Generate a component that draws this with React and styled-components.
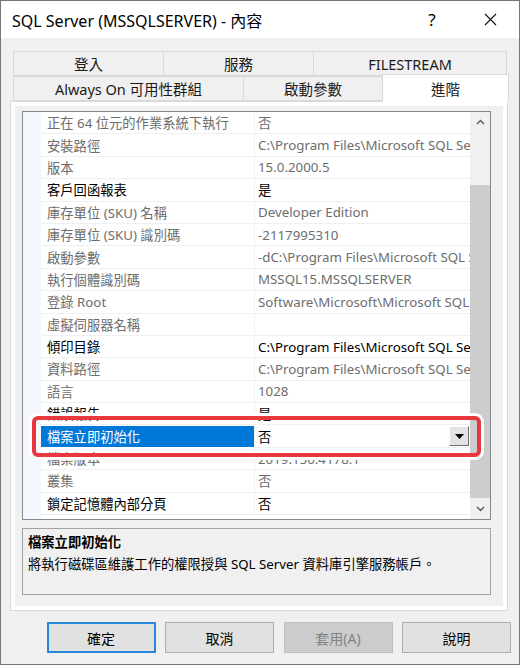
import React from "react";
import styled, { createGlobalStyle } from "styled-components";

const GlobalStyle = createGlobalStyle`
  html, body { margin: 0; padding: 0; background: #fff; }
  * { box-sizing: border-box; }
`;

const FONT = `"Segoe UI", "Noto Sans", "Noto Sans CJK TC", sans-serif`;

const Window = styled.div`
  width: 520px;
  height: 665px;
  border: 1px solid #777;
  background: #f0f0f0;
  display: flex;
  flex-direction: column;
  font-family: ${FONT};
  color: #000;
`;

const TitleBar = styled.div`
  height: 37px;
  flex-shrink: 0;
  background: #fff;
  display: flex;
  align-items: center;
  padding-left: 11px;
`;

const Title = styled.div`
  flex: 1;
  font-size: 16px;
`;

const TitleButton = styled.div`
  width: 58px;
  height: 37px;
  display: flex;
  align-items: center;
  justify-content: center;
  font-size: 17px;
`;

const Body = styled.div`
  flex: 1;
  display: flex;
  flex-direction: column;
  padding: 13px 8px 0 9px;
`;

const TabRow = styled.div`
  display: flex;
  height: 25px;
  padding-left: ${(p) => p.$indent || 0}px;
  align-items: flex-start;
`;

const Tab = styled.div`
  width: ${(p) => p.$w}px;
  height: ${(p) => (p.$active ? 28 : 25)}px;
  margin-top: ${(p) => (p.$active ? -2 : 0)}px;
  margin-left: -1px;
  border: 1px solid #d9d9d9;
  border-bottom: ${(p) => (p.$active ? "none" : "1px solid #d9d9d9")};
  background: ${(p) => (p.$active ? "#fff" : "#f0f0f0")};
  position: relative;
  z-index: ${(p) => (p.$active ? 2 : 0)};
  display: flex;
  align-items: center;
  justify-content: center;
  font-size: 14.5px;
  color: #1a1a1a;
  &:first-child { margin-left: 0; }
`;

const Panel = styled.div`
  position: relative;
  width: 498px;
  height: 510px;
  border: 1px solid #d9d9d9;
  background: #f0f0f0;
  box-shadow: inset 0 0 0 4px #fff;
  padding: 9px 16px 0 11px;
  display: flex;
  flex-direction: column;
`;

const Grid = styled.div`
  height: 409px;
  flex-shrink: 0;
  border: 1px solid #828790;
  background: #fff;
  display: flex;
`;

const Rows = styled.div`
  flex: 1;
  display: flex;
  flex-direction: column;
  overflow: hidden;
`;

const Row = styled.div`
  display: grid;
  grid-template-columns: 18px 214px 1fr;
  height: 22.4px;
  flex-shrink: 0;
  font-size: 13.3px;
`;

const Filler = styled(Row)`
  flex: 1;
  height: auto;
`;

const Gutter = styled.div`
  background: #f4f7fb;
`;

const LabelCell = styled.div`
  display: flex;
  align-items: center;
  padding-left: 6px;
  white-space: nowrap;
  overflow: hidden;
  border-right: 1px solid #f0f0f0;
  border-bottom: 1px solid #f0f0f0;
  color: ${(p) => (p.$dark ? "#000" : "#6d6d6d")};
  ${(p) =>
    p.$selected &&
    `
    background: #0078d7;
    color: #fff;
    border-top: 1px solid #fff;
    border-bottom: 1px solid #fff;
  `}
`;

const ValueCell = styled.div`
  display: flex;
  align-items: center;
  padding-left: 3px;
  white-space: nowrap;
  overflow: hidden;
  border-bottom: 1px solid #f0f0f0;
  color: ${(p) => (p.$dark ? "#000" : "#6d6d6d")};
`;

const ValueText = styled.span`
  flex: 1;
  overflow: hidden;
`;

const DropButton = styled.div`
  width: 20px;
  height: 20px;
  flex-shrink: 0;
  margin-right: 1px;
  background: #e3e3e3;
  border: 1px solid;
  border-color: #fdfdfd #6f6f6f #6f6f6f #fdfdfd;
  display: flex;
  align-items: center;
  justify-content: center;
`;

const Scrollbar = styled.div`
  width: 20px;
  flex-shrink: 0;
  background: #f0f0f0;
  display: flex;
  flex-direction: column;
`;

const ArrowBox = styled.div`
  height: ${(p) => p.$h}px;
  display: flex;
  align-items: center;
  justify-content: center;
  flex-shrink: 0;
`;

const Track = styled.div`
  flex: 1;
  padding-top: ${(p) => p.$offset}px;
`;

const Thumb = styled.div`
  height: ${(p) => p.$h}px;
  background: #cdcdcd;
`;

const Description = styled.div`
  margin-top: 8px;
  height: 67px;
  border: 1px solid #a3a3a3;
  padding: 2px 5px;
  font-size: 13.3px;
  line-height: 22px;
`;

const DescTitle = styled.div`
  font-weight: bold;
`;

const Highlight = styled.div`
  position: absolute;
  left: 21px;
  top: 314px;
  width: 449px;
  height: 41px;
  border: 4px solid #e8383d;
  border-radius: 6px;
  box-shadow: 0 0 0 3px #fff;
  pointer-events: none;
`;

const ButtonRow = styled.div`
  display: flex;
  justify-content: flex-end;
  gap: 9.5px;
  margin-top: 11px;
`;

const Button = styled.div`
  width: 109px;
  height: 31px;
  display: flex;
  align-items: center;
  justify-content: center;
  font-size: 14px;
  background: ${(p) => (p.$disabled ? "#cccccc" : "#e1e1e1")};
  color: ${(p) => (p.$disabled ? "#838383" : "#000")};
  border: ${(p) =>
    p.$default ? "2px solid #2a86da" : p.$disabled ? "1px solid #bfbfbf" : "1px solid #adadad"};
`;

const rows = [
  { label: "正在 64 位元的作業系統下執行", value: "否" },
  { label: "安裝路徑", value: "C:\\Program Files\\Microsoft SQL Server\\MSSQL15.MSSQLSERVER\\MSSQL" },
  { label: "版本", value: "15.0.2000.5" },
  { label: "客戶回函報表", value: "是", dark: true },
  { label: "庫存單位 (SKU) 名稱", value: "Developer Edition" },
  { label: "庫存單位 (SKU) 識別碼", value: "-2117995310" },
  { label: "啟動參數", value: "-dC:\\Program Files\\Microsoft SQL Server\\MSSQL15.MSSQLSERVER" },
  { label: "執行個體識別碼", value: "MSSQL15.MSSQLSERVER" },
  { label: "登錄 Root", value: "Software\\Microsoft\\Microsoft SQL Server\\MSSQL15.MSSQLSERVER" },
  { label: "虛擬伺服器名稱", value: "" },
  { label: "傾印目錄", value: "C:\\Program Files\\Microsoft SQL Server\\MSSQL15.MSSQLSERVER\\MSSQL\\LOG\\", dark: true },
  { label: "資料路徑", value: "C:\\Program Files\\Microsoft SQL Server\\MSSQL15.MSSQLSERVER\\MSSQL" },
  { label: "語言", value: "1028" },
  { label: "錯誤報告", value: "是", dark: true },
  { label: "檔案立即初始化", value: "否", dark: true, selected: true },
  { label: "檔案版本", value: "2019.150.4178.1" },
  { label: "叢集", value: "否" },
  { label: "鎖定記憶體內部分頁", value: "否", dark: true },
];

function Chevron({ up }) {
  return (
    <svg width="9" height="6" viewBox="0 0 9 6">
      <polyline
        points={up ? "1,5 4.5,1.5 8,5" : "1,1 4.5,4.5 8,1"}
        fill="none"
        stroke="#606060"
        strokeWidth="1.5"
      />
    </svg>
  );
}

export default function App() {
  return (
    <Window>
      <GlobalStyle />
      <TitleBar>
        <Title>SQL Server (MSSQLSERVER) - 內容</Title>
        <TitleButton>?</TitleButton>
        <TitleButton>
          <svg width="13" height="13" viewBox="0 0 13 13">
            <path d="M1 1 L12 12 M12 1 L1 12" stroke="#111" strokeWidth="1.1" />
          </svg>
        </TitleButton>
      </TitleBar>

      <Body>
        <TabRow $indent={3}>
          <Tab $w={151}>登入</Tab>
          <Tab $w={151}>服務</Tab>
          <Tab $w={194}>FILESTREAM</Tab>
        </TabRow>
        <TabRow $indent={3}>
          <Tab $w={231}>Always On 可用性群組</Tab>
          <Tab $w={140}>啟動參數</Tab>
          <Tab $w={127} $active>進階</Tab>
        </TabRow>

        <Panel>
          <Grid>
            <Rows>
              {rows.map((r) => (
                <Row key={r.label}>
                  <Gutter />
                  <LabelCell $dark={r.dark} $selected={r.selected}>
                    {r.label}
                  </LabelCell>
                  <ValueCell $dark={r.dark}>
                    <ValueText>{r.value}</ValueText>
                    {r.selected && (
                      <DropButton>
                        <svg width="9" height="5" viewBox="0 0 9 5">
                          <polygon points="0,0 9,0 4.5,5" fill="#000" />
                        </svg>
                      </DropButton>
                    )}
                  </ValueCell>
                </Row>
              ))}
              <Filler>
                <Gutter />
                <div />
                <div />
              </Filler>
            </Rows>
            <Scrollbar>
              <ArrowBox $h={20}>
                <Chevron up />
              </ArrowBox>
              <Track $offset={53}>
                <Thumb $h={313} />
              </Track>
              <ArrowBox $h={21}>
                <Chevron />
              </ArrowBox>
            </Scrollbar>
          </Grid>

          <Description>
            <DescTitle>檔案立即初始化</DescTitle>
            <div>將執行磁碟區維護工作的權限授與 SQL Server 資料庫引擎服務帳戶。</div>
          </Description>

          <Highlight />
        </Panel>

        <ButtonRow>
          <Button $default>確定</Button>
          <Button>取消</Button>
          <Button $disabled>套用(A)</Button>
          <Button>說明</Button>
        </ButtonRow>
      </Body>
    </Window>
  );
}
